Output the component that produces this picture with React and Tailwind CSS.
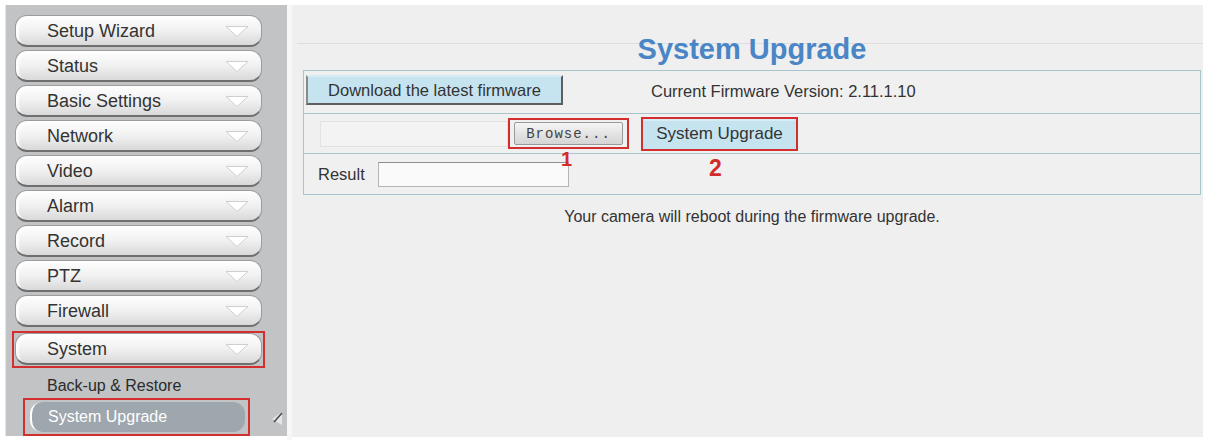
import React from 'react';

const menu = ['Setup Wizard', 'Status', 'Basic Settings', 'Network', 'Video', 'Alarm', 'Record', 'PTZ', 'Firewall', 'System'];

const Arrow = () => (
  <svg width="24" height="13" viewBox="0 0 24 13" className="shrink-0">
    <rect x="0" y="0" width="24" height="2" fill="#f4f4f4" />
    <polygon points="1,2.5 23,2.5 12,12.5" fill="#ffffff" stroke="#cfcfcf" strokeWidth="1" />
  </svg>
);

const Pill = ({ label }) => (
  <div className="h-[32px] w-[247px] rounded-[12px] border border-[#9c9c9c] border-b-2 border-b-[#6f6f6f] bg-gradient-to-b from-[#fefefe] via-[#f1f1f1] to-[#d9d9d9] shadow-[inset_3px_2px_2px_rgba(255,255,255,0.9)] flex items-center justify-between pl-[31px] pr-[12px] text-[18px] text-[#333]">
    <span className="leading-none">{label}</span>
    <Arrow />
  </div>
);

// highlighted entries get a square red frame drawn around them
const MenuItem = ({ label, active }) =>
  active ? (
    <div className="-mx-[3px] -my-[1px] w-[253px] border-2 border-[#d32f2f] px-[1px] pt-[0px] pb-[1px] mt-[1px]">
      <Pill label={label} />
    </div>
  ) : (
    <Pill label={label} />
  );

const BlueButton = ({ children, className = '' }) => (
  <button
    className={`bg-[#c6e4f0] border-2 border-[#5e5e5e] border-t-[#d6edf6] border-l-[#8a8a8a] text-[#333] text-[16.5px] leading-none flex items-center justify-center ${className}`}
  >
    {children}
  </button>
);

export default function App() {
  return (
    <div className="w-[1209px] h-[440px] bg-white flex pt-[5px] pl-[5px] font-['Liberation_Sans',Arial,sans-serif] overflow-hidden">
      {/* left navigation */}
      <aside className="w-[282px] h-[431px] bg-[#c1c3c5] border-l border-[#e4e5e6] pl-[9px] pt-[10px] flex flex-col">
        <div className="flex flex-col gap-[3px]">
          {menu.map((m) => (
            <MenuItem key={m} label={m} active={m === 'System'} />
          ))}
        </div>
        <div className="pl-[32px] pt-[11px] h-[36px] text-[16px] text-[#2b2b2b] leading-none">Back-up &amp; Restore</div>
        <div className="flex items-center">
          <div className="ml-[8px] w-[227px] h-[38px] border-2 border-[#d32f2f] flex items-center pl-[5px]">
            <div className="h-[30px] w-[215px] rounded-[12px] border-l-2 border-white bg-[#9ea6ae] flex items-center pl-[16px] text-[16px] text-white leading-none">
              System Upgrade
            </div>
          </div>
          <svg width="14" height="16" viewBox="0 0 14 16" className="ml-[20px] mt-[2px]">
            <polygon points="12,2 2,9 12,15" fill="#e6e7e8" />
            <line x1="4" y1="12" x2="12" y2="3" stroke="#4a4a4a" strokeWidth="1.6" />
          </svg>
        </div>
      </aside>

      <div className="w-[5px] bg-[#f7f7f7]" />

      {/* main panel */}
      <main className="w-[911px] h-[432px] bg-[#efefef] flex flex-col">
        <div className="h-[39px] ml-[5px] border-b border-[#dedede]" />
        <h1 className="-mt-[10px] ml-[11px] w-[898px] text-center text-[29px] leading-[30px] font-bold text-[#4a86c6]">System Upgrade</h1>

        <div className="relative mt-[6px] ml-[11px] w-[898px] border border-[#a9c4cc] bg-[#f0f0f0]">
          {/* row: download firmware */}
          <div className="h-[43px] flex items-start pt-[4px] pl-[2px] border-b border-[#a9c4cc]">
            <BlueButton className="w-[257px] h-[30px]">Download the latest firmware</BlueButton>
            <span className="ml-[88px] mt-[8px] text-[16.5px] leading-none text-[#333]">Current Firmware Version: 2.11.1.10</span>
          </div>

          {/* row: choose file + upgrade */}
          <div className="h-[40px] flex items-center pl-[16px] border-b border-[#a9c4cc]">
            <div className="w-[188px] h-[26px] border border-[#e2e2e2] bg-[#f3f3f3]" />
            <div className="w-[121px] h-[31px] border-2 border-[#d32f2f] flex items-center justify-center">
              <button className="w-[109px] h-[23px] rounded-[2px] border border-[#9a9a9a] bg-gradient-to-b from-[#f5f5f5] to-[#d4d4d4] font-['Liberation_Mono',monospace] text-[14px] tracking-[1px] text-[#444] leading-none">
                Browse...
              </button>
            </div>
            <div className="ml-[12px] w-[157px] h-[34px] border-2 border-[#d32f2f]">
              <BlueButton className="w-full h-full border-[#c6e4f0] border-t-[#c6e4f0] border-l-[#c6e4f0] text-[17px]">System Upgrade</BlueButton>
            </div>
          </div>

          {/* row: result */}
          <div className="h-[40px] flex items-center pl-[14px]">
            <span className="text-[16.5px] leading-none text-[#333]">Result</span>
            <div className="ml-[13px] w-[191px] h-[25px] border border-[#b5b5b5] border-t-[#8f8f8f] bg-[#fafafa]" />
          </div>

          <span className="absolute left-[257px] top-[78px] text-[20px] font-bold leading-none text-[#d32a2a]">1</span>
          <span className="absolute left-[405px] top-[86px] text-[23px] font-bold leading-none text-[#d32a2a]">2</span>
        </div>

        <p className="mt-[12px] ml-[11px] w-[898px] text-center text-[16px] leading-[20px] text-[#333]">
          Your camera will reboot during the firmware upgrade.
        </p>
      </main>
    </div>
  );
}
